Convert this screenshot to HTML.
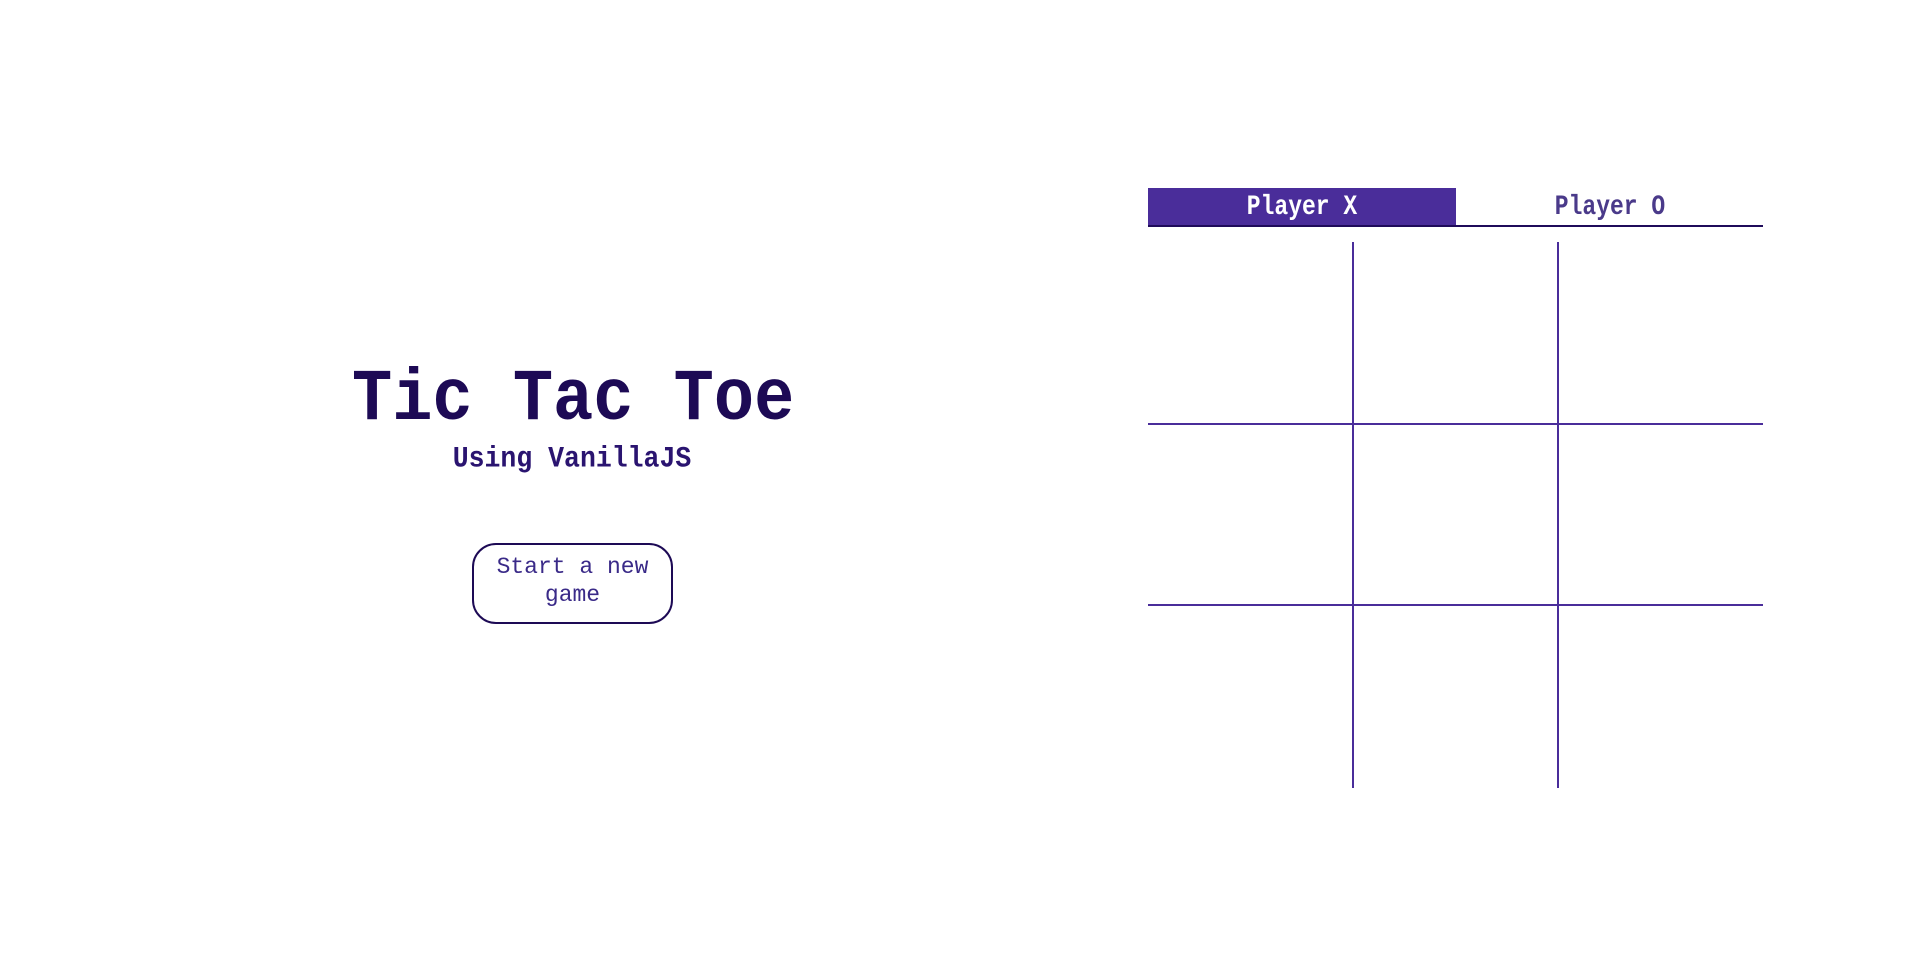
<!DOCTYPE html>
<html><head><meta charset="utf-8"><style>
html,body{margin:0;padding:0;background:#fff;width:1912px;height:972px;overflow:hidden;font-family:"Liberation Mono",monospace;}
.abs{position:absolute;white-space:nowrap;}
#title{left:352px;top:362px;width:440px;text-align:center;font-size:67px;font-weight:bold;color:#1d0a55;line-height:70px;transform:scaleY(1.1);transform-origin:center top;}
#sub{left:432px;top:444px;width:280px;text-align:center;font-size:26.5px;font-weight:bold;color:#2a1470;line-height:30px;transform:scaleY(1.1);}
#btn{left:472px;top:543px;width:197px;height:77px;border:2px solid #1d0a55;border-radius:24px;}
#btnt{left:472px;top:553px;width:201px;text-align:center;font-size:23px;color:#3a2a88;line-height:28px;}
#tabx{left:1148px;top:188px;width:308px;height:38px;background:#4a2d9a;}
#tabline{left:1148px;top:225px;width:615px;height:1.5px;background:#1f0b5a;}
.tt{top:192px;font-size:23px;font-weight:bold;line-height:30px;transform:scaleY(1.2);text-align:center;width:308px;}
.v{width:2px;background:#4a2d9a;top:242px;height:546px;}
.h{height:2px;background:#4a2d9a;left:1148px;width:615px;}
</style></head><body>
<div class="abs" id="title">Tic Tac Toe</div>
<div class="abs" id="sub">Using VanillaJS</div>
<div class="abs" id="btn"></div>
<div class="abs" id="btnt">Start a new<br>game</div>
<div class="abs" id="tabx"></div>
<div class="abs" id="tabline"></div>
<div class="abs tt" style="left:1148px;color:#fff;">Player X</div>
<div class="abs tt" style="left:1456px;color:#4a3a8a;">Player O</div>
<div class="abs v" style="left:1352px"></div>
<div class="abs v" style="left:1557px"></div>
<div class="abs h" style="top:423px"></div>
<div class="abs h" style="top:604px"></div>
</body></html>
